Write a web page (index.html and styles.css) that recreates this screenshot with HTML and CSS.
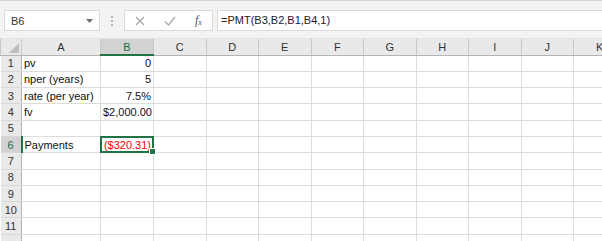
FILE: index.html
```html
<!DOCTYPE html>
<html lang="en">
<head>
  <meta charset="UTF-8" />
  <title>Book1 - Excel</title>
  <link rel="stylesheet" href="styles.css">
</head>
<body>
  <div class="toolbar">
    <div class="namebox">
      <span>B6</span>
      <svg class="arrow" width="7" height="4" viewBox="0 0 7 4"><path d="M0 0h7L3.5 4z" fill="#707070"/></svg>
    </div>
    <div class="grip"><i></i><i></i><i></i></div>
    <div class="fxbtns">
      <svg width="10" height="10" viewBox="0 0 10 10"><path d="M1 1l8 8M9 1l-8 8" stroke="#a6a6a6" stroke-width="1.2" fill="none"/></svg>
      <svg width="12" height="10" viewBox="0 0 12 10"><path d="M1 5.5l3.5 3.5L11 1" stroke="#a6a6a6" stroke-width="1.2" fill="none"/></svg>
      <span class="fx">f<sub>x</sub></span>
    </div>
    <div class="formula">=PMT(B3,B2,B1,B4,1)</div>
  </div>

  <table class="sheet">
    <colgroup>
      <col class="c-head"><col class="c-a"><col class="c-b">
      <col><col><col><col><col><col><col><col><col>
    </colgroup>
    <thead>
      <tr>
        <th class="corner"><span class="tri"></span></th>
        <th>A</th><th class="sel">B</th><th>C</th><th>D</th><th>E</th><th>F</th>
        <th>G</th><th>H</th><th>I</th><th>J</th><th>K</th>
      </tr>
    </thead>
    <tbody>
      <tr><th>1</th><td>pv</td><td class="num">0</td><td></td><td></td><td></td><td></td><td></td><td></td><td></td><td></td><td></td></tr>
      <tr><th>2</th><td>nper (years)</td><td class="num">5</td><td></td><td></td><td></td><td></td><td></td><td></td><td></td><td></td><td></td></tr>
      <tr><th>3</th><td>rate (per year)</td><td class="num">7.5%</td><td></td><td></td><td></td><td></td><td></td><td></td><td></td><td></td><td></td></tr>
      <tr><th>4</th><td>fv</td><td class="num">$2,000.00</td><td></td><td></td><td></td><td></td><td></td><td></td><td></td><td></td><td></td></tr>
      <tr><th>5</th><td></td><td></td><td></td><td></td><td></td><td></td><td></td><td></td><td></td><td></td><td></td></tr>
      <tr><th class="sel-row">6</th><td>Payments</td><td class="num neg active">($320.31)<span class="cursor"><span class="handle"></span></span></td><td></td><td></td><td></td><td></td><td></td><td></td><td></td><td></td><td></td></tr>
      <tr><th>7</th><td></td><td></td><td></td><td></td><td></td><td></td><td></td><td></td><td></td><td></td><td></td></tr>
      <tr><th>8</th><td></td><td></td><td></td><td></td><td></td><td></td><td></td><td></td><td></td><td></td><td></td></tr>
      <tr><th>9</th><td></td><td></td><td></td><td></td><td></td><td></td><td></td><td></td><td></td><td></td><td></td></tr>
      <tr><th>10</th><td></td><td></td><td></td><td></td><td></td><td></td><td></td><td></td><td></td><td></td><td></td></tr>
      <tr><th>11</th><td></td><td></td><td></td><td></td><td></td><td></td><td></td><td></td><td></td><td></td><td></td></tr>
      <tr><th></th><td></td><td></td><td></td><td></td><td></td><td></td><td></td><td></td><td></td><td></td><td></td></tr>
    </tbody>
  </table>
</body>
</html>
```

FILE: styles.css
```css
body {
  margin: 0;
  width: 602px;
  height: 241px;
  overflow: hidden;
  font-family: 'Liberation Sans', Arial, sans-serif;
  font-size: 11px;
  color: #222;
  background: #fff;
}
.toolbar {
  display: flex;
  align-items: flex-start;
  height: 39px;
  box-sizing: border-box;
  padding: 9px 0 0 4px;
  background: #f3f3f3;
  border-top: 1px solid #d6d6d6;
  border-bottom: 1px solid #e2e2e2;
}
.namebox {
  width: 96px;
  height: 21px;
  box-sizing: border-box;
  background: white;
  border: 1px solid #dadada;
  display: flex;
  align-items: center;
  justify-content: space-between;
  padding: 0 6px 0 6px;
  font-size: 11px;
  color: #333;
}
.namebox .arrow {
  margin-top: 1px;
}
.grip {
  display: flex;
  flex-direction: column;
  gap: 2px;
  margin: 6px 11px 0 11px;
  width: 2px;
}
.grip i {
  display: block;
  width: 2px;
  height: 2px;
  background: #b4b4b4;
}
.fxbtns {
  width: 89px;
  height: 21px;
  box-sizing: border-box;
  background: white;
  border: 1px solid #dadada;
  display: flex;
  align-items: center;
  padding: 0 0 0 10px;
  gap: 19px;
}
.fx {
  font-family: 'Liberation Serif', serif;
  font-style: italic;
  font-size: 12px;
  color: #555;
}
.fx sub {
  font-size: 8px;
  vertical-align: -1px;
}
.formula {
  flex: 1;
  height: 21px;
  box-sizing: border-box;
  margin-left: 4px;
  margin-right: -4px;
  background: white;
  border: 1px solid #dadada;
  padding: 3px 0 0 3px;
  color: #222;
}
.sheet {
  border-collapse: collapse;
  table-layout: fixed;
  width: 626px;
}
.sheet col {
  width: 52.5px;
}
.sheet col.c-head {
  width: 21px;
}
.sheet col.c-a {
  width: 79px;
}
.sheet col.c-b {
  width: 53px;
}
.sheet tr {
  height: 16.3px;
}
.sheet thead tr {
  height: 16px;
}
.sheet th {
  background: #e9e9e9;
  font-weight: normal;
  color: #333;
  border: 1px solid #c8c8c8;
  padding: 0;
  text-align: center;
  line-height: 14px;
}
.sheet thead th {
  border-top: none;
  border-bottom: 1px solid #b4b4b4;
}
.sheet tbody th {
  border-left: none;
  border-right: 1px solid #b4b4b4;
  border-top-color: #d8d8d8;
  border-bottom-color: #d8d8d8;
  text-align: center;
}
.sheet thead th.sel {
  background: #d2d2d2;
  color: #1e6b41;
  border-bottom: 2px solid #217346;
}
.sheet tbody th.sel-row {
  background: #d2d2d2;
  color: #1e6b41;
  border-right: 2px solid #217346;
}
.corner {
  position: relative;
}
.corner .tri {
  position: absolute;
  right: 2px;
  bottom: 2px;
  width: 0;
  height: 0;
  border-left: 10px solid transparent;
  border-bottom: 10px solid #bfbfbf;
}
.sheet td {
  border: 1px solid #dcdcdc;
  padding: 0 2px;
  line-height: 14px;
  white-space: nowrap;
  overflow: visible;
  color: #111;
}
.sheet td.num {
  text-align: right;
}
.sheet td.neg {
  color: #ff0000;
}
.sheet td.active {
  position: relative;
}
.cursor {
  position: absolute;
  left: -1px;
  top: -1px;
  right: -1px;
  bottom: -1px;
  border: 2px solid #217346;
}
.handle {
  position: absolute;
  right: -4px;
  bottom: -4px;
  width: 5px;
  height: 5px;
  background: #217346;
  border: 1px solid white;
}
```
